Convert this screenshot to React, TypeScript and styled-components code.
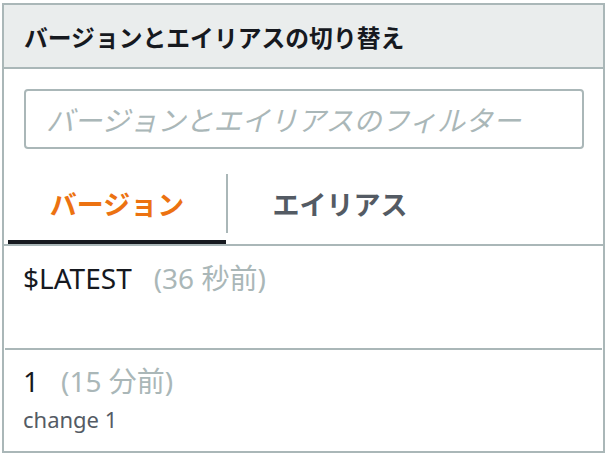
import React from "react";
import styled, { createGlobalStyle } from "styled-components";

const GlobalStyle = createGlobalStyle`
  html, body {
    margin: 0;
    padding: 0;
    background: #ffffff;
  }
  body {
    font-family: "Noto Sans", "Noto Sans CJK JP", sans-serif;
    color: #16191f;
  }
  * { box-sizing: border-box; }
`;

const Panel = styled.div`
  margin: 3px 0 0 2px;
  width: 603px;
  border: 2px solid #aab7b8;
  background: #ffffff;
  display: flex;
  flex-direction: column;
`;

const Header = styled.div`
  height: 64px;
  background: #eaeded;
  border-bottom: 2px solid #aab7b8;
  display: flex;
  align-items: center;
  padding: 0 20px;
  font-family: "Noto Sans CJK JP", sans-serif;
  font-size: 23.8px;
  font-weight: 700;
  color: #16191f;
`;

const Body = styled.div`
  padding-top: 20px;
  display: flex;
  flex-direction: column;
`;

const FilterInput = styled.input`
  margin: 0 19px 0 20px;
  height: 60px;
  border: 2px solid #aab7b8;
  border-radius: 4px;
  padding: 0 20px;
  font-family: "Noto Sans CJK JP", sans-serif;
  font-size: 28px;
  color: #16191f;
  outline: none;
  background: #ffffff;
  &::placeholder {
    color: #aab7b8;
    font-style: italic;
  }
`;

const TabList = styled.div`
  margin-top: 21px;
  display: flex;
  align-items: flex-start;
  padding-left: 4px;
  border-bottom: 2px solid #aab7b8;
`;

const Tab = styled.button<{ $active?: boolean; $width: number }>`
  width: ${(p) => p.$width}px;
  padding: 4px 0 7px;
  margin: 0;
  border: none;
  border-bottom: 4px solid ${(p) => (p.$active ? "#16191f" : "transparent")};
  background: transparent;
  font-family: "Noto Sans CJK JP", sans-serif;
  font-size: 27px;
  font-weight: 700;
  color: ${(p) => (p.$active ? "#ec7211" : "#545b64")};
  cursor: pointer;
`;

const TabLabel = styled.span`
  display: flex;
  height: 59px;
  align-items: center;
  justify-content: center;
`;

const TabDivider = styled.span`
  width: 2px;
  height: 59px;
  margin-top: 4px;
  background: #aab7b8;
  flex: none;
`;

const List = styled.ul`
  list-style: none;
  margin: 0 1px;
  padding: 0;
`;

const Row = styled.li`
  padding: 12px 20px 17px 18px;
  & + & {
    border-top: 2px solid #aab7b8;
    padding-top: 11px;
  }
`;

const Title = styled.div`
  display: flex;
  align-items: baseline;
  height: 40px;
  line-height: 40px;
  font-size: 28px;
  font-weight: 400;
  color: #16191f;
`;

const Age = styled.span`
  margin-left: 22px;
  color: #aab7b8;
`;

const Description = styled.div`
  margin-top: 3px;
  min-height: 30px;
  line-height: 30px;
  font-size: 22px;
  color: #545b64;
`;

const versions = [
  { name: "$LATEST", age: "(36 秒前)", description: "" },
  { name: "1", age: "(15 分前)", description: "change 1" },
];

export default function App() {
  return (
    <>
      <GlobalStyle />
      <Panel>
        <Header>バージョンとエイリアスの切り替え</Header>
        <Body>
          <FilterInput placeholder="バージョンとエイリアスのフィルター" />
          <TabList>
            <Tab $active $width={218}>
              <TabLabel>バージョン</TabLabel>
            </Tab>
            <TabDivider />
            <Tab $width={224}>
              <TabLabel>エイリアス</TabLabel>
            </Tab>
          </TabList>
          <List>
            {versions.map((v) => (
              <Row key={v.name}>
                <Title>
                  {v.name}
                  <Age>{v.age}</Age>
                </Title>
                <Description>{v.description}</Description>
              </Row>
            ))}
          </List>
        </Body>
      </Panel>
    </>
  );
}
